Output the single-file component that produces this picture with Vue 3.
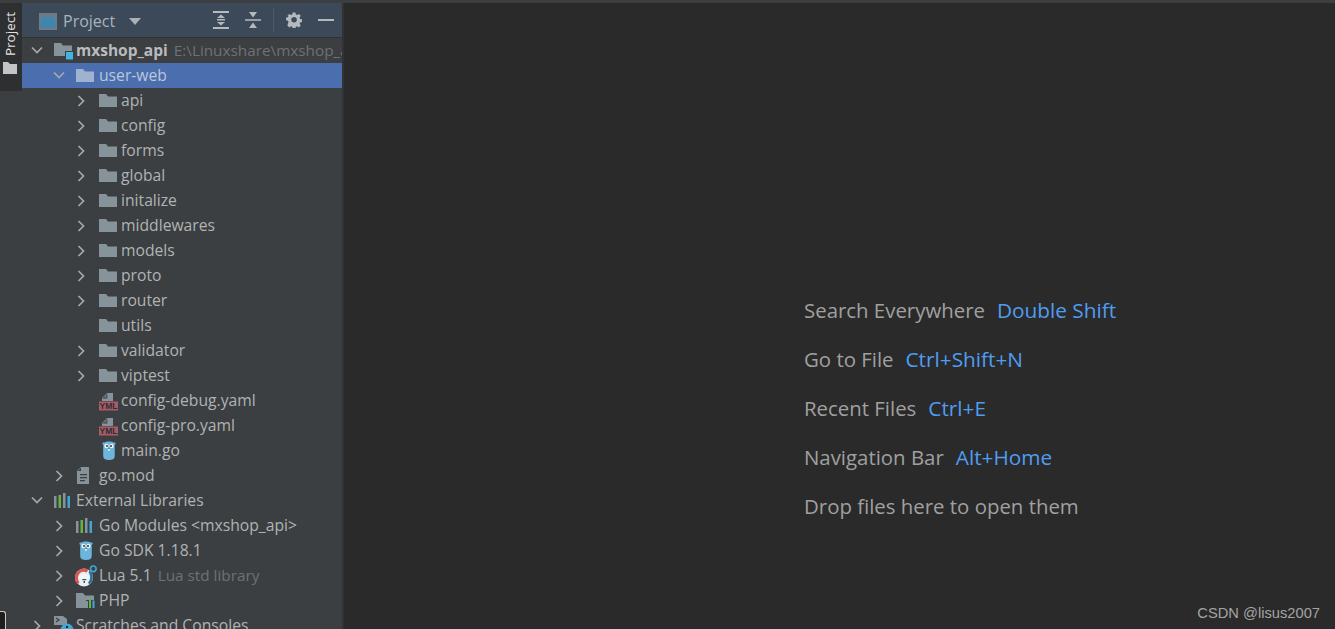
<script setup>
const rows = [
  { level: 0, arrow: 'down', icon: 'module', text: 'mxshop_api', bold: true, hint: 'E:\\Linuxshare\\mxshop_api' },
  { level: 1, arrow: 'down', icon: 'folder', text: 'user-web', selected: true },
  ...['api', 'config', 'forms', 'global', 'initalize', 'middlewares', 'models', 'proto', 'router'].map((text) => ({ level: 2, arrow: 'right', icon: 'folder', text })),
  { level: 2, arrow: '', icon: 'folder', text: 'utils' },
  { level: 2, arrow: 'right', icon: 'folder', text: 'validator' },
  { level: 2, arrow: 'right', icon: 'folder', text: 'viptest' },
  { level: 2, arrow: '', icon: 'yaml', text: 'config-debug.yaml' },
  { level: 2, arrow: '', icon: 'yaml', text: 'config-pro.yaml' },
  { level: 2, arrow: '', icon: 'gopher', text: 'main.go' },
  { level: 1, arrow: 'right', icon: 'file', text: 'go.mod' },
  { level: 0, arrow: 'down', icon: 'lib', text: 'External Libraries' },
  { level: 1, arrow: 'right', icon: 'lib', text: 'Go Modules <mxshop_api>' },
  { level: 1, arrow: 'right', icon: 'gopher', text: 'Go SDK 1.18.1' },
  { level: 1, arrow: 'right', icon: 'lua', text: 'Lua 5.1', hint: 'Lua std library' },
  { level: 1, arrow: 'right', icon: 'php', text: 'PHP' },
  { level: 0, arrow: 'right', icon: 'scratch', text: 'Scratches and Consoles' },
]
const hints = [
  { label: 'Search Everywhere', key: 'Double Shift' },
  { label: 'Go to File', key: 'Ctrl+Shift+N' },
  { label: 'Recent Files', key: 'Ctrl+E' },
  { label: 'Navigation Bar', key: 'Alt+Home' },
  { label: 'Drop files here to open them', key: '' },
]
const indent = (level) => ({ paddingLeft: 7 + 22 * level + 'px' })
</script>

<template>
  <div class="ide">
    <div class="top-line"></div>
    <div class="main">
      <aside class="strip">
        <div class="tab">
          <span class="tab-label">Project</span>
          <svg class="tab-icon" width="16" height="14" viewBox="0 0 16 14"><path fill="#c4c4c4" d="M1 1h5l2 2h7v10H1z"/></svg>
        </div>
        <div class="corner"></div>
      </aside>

      <section class="panel">
        <header class="head">
          <svg width="18" height="17" viewBox="0 0 18 17"><rect width="18" height="17" fill="#6e7b85"/><rect x="2" y="4" width="14" height="11" fill="#3d86ad"/></svg>
          <span class="head-title">Project</span>
          <svg class="caret" width="12" height="7" viewBox="0 0 12 7"><path fill="#a9b0b6" d="M0 0h12L6 7z"/></svg>
          <div class="tools">
            <svg width="16" height="18" viewBox="0 0 16 18"><path fill="#b4b9bd" d="M0 0h16v2H0zM0 16h16v2H0zM8 3.500l4 3.500H4zM8 14.500l4-3.500H4zM4 8h8v1.500H4z"/></svg>
            <svg width="16" height="16" viewBox="0 0 16 16"><path fill="#b4b9bd" d="M0 7.200h16v1.600H0zM4 0h8L8 5.500zM4 16h8L8 10.500z"/></svg>
            <i class="sep"></i>
            <svg width="16" height="16" viewBox="0 0 16 16"><path fill="#b4b9bd" fill-rule="evenodd" d="M6.500 0h3l.4 2.200 1.500.6L13.200 1.500l2.100 2.100-1.300 1.900.6 1.500 2.100.4v3l-2.100.4-.6 1.500 1.300 1.900-2.100 2.100-1.800-1.300-1.500.6-.4 2.200h-3l-.4-2.200-1.500-.6-1.800 1.300-2.100-2.100L2 10.400l-.6-1.500L-.7 8.500v-3l2.100-.4.600-1.500L.7 3.600l2.100-2.100 1.800 1.300 1.500-.6zM8 5a3 3 0 1 0 0 6 3 3 0 0 0 0-6z" transform="translate(.7 .5) scale(.92)"/></svg>
            <svg width="16" height="3" viewBox="0 0 16 3"><path fill="#b4b9bd" d="M0 0h16v2H0z"/></svg>
          </div>
        </header>

        <div class="tree">
          <div v-for="row in rows" :key="row.text" class="row" :class="{ selected: row.selected, root: row.level === 0, deep: row.level === 2 }" :style="indent(row.level)">
            <span class="arrow">
              <svg v-if="row.arrow === 'down'" width="14" height="9" viewBox="0 0 14 9"><path fill="none" stroke="#a6a9ab" stroke-width="1.700" d="M2 1.500l5 5 5-5"/></svg>
              <svg v-else-if="row.arrow === 'right'" width="9" height="14" viewBox="0 0 9 14"><path fill="none" stroke="#a6a9ab" stroke-width="1.700" d="M1.500 2l5 5-5 5"/></svg>
            </span>
            <span class="icon">
              <svg v-if="row.icon === 'folder'" width="18" height="18" viewBox="0 0 18 18"><path :fill="row.selected ? '#9fb2cf' : '#87939a'" d="M0 2h7l2 2.500h9V15H0z"/></svg>
              <svg v-else-if="row.icon === 'module'" width="20" height="20" viewBox="0 0 20 20"><path fill="#87939a" d="M0 2h7l2 2.500h9V15H0z"/><rect x="11" y="10" width="8" height="9" fill="#3c3f41"/><rect x="12" y="11" width="7" height="7.500" fill="#3fb4e5"/></svg>
              <svg v-else-if="row.icon === 'yaml'" width="19" height="20" viewBox="0 0 19 20"><path fill="#87939a" d="M3 10V7l5-5h6v8z"/><path fill="#3c3f41" d="M8.300 7.500V2.500L3.300 7.500z"/><path fill="#6f7a81" d="M4.500 6.500L7.500 3.500v3z"/><rect y="10.500" width="19" height="9" fill="#a85b68"/><text x="9.500" y="18.300" class="yml">YML</text></svg>
              <svg v-else-if="row.icon === 'gopher'" class="gopher" width="14" height="20" viewBox="0 0 14 20"><path fill="#6cb6dd" d="M1 1.500h1.700C4 .3 10 .3 11.300 1.500H13c1 .7.800 2-.5 2.400.4 1 .4 10 .1 12.300-.3 1.600-2 2.800-5.600 2.800s-5.300-1.200-5.600-2.800C1.100 13.900 1.100 4.900 1.500 3.900.2 3.500 0 2.200 1 1.500z"/><circle cx="4.500" cy="5" r="2.200" fill="#e8f2f7"/><circle cx="9.500" cy="5" r="2.200" fill="#e8f2f7"/><circle cx="5" cy="5" r="1" fill="#2b3a44"/><circle cx="9" cy="5" r="1" fill="#2b3a44"/><path fill="#dfe7ea" d="M6 7.500h2v2.200H6z"/><path fill="#3b5a6b" d="M6.200 6.800h1.600v1H6.200z"/></svg>
              <svg v-else-if="row.icon === 'file'" width="15" height="19" viewBox="0 0 15 19"><path fill="#87939a" d="M1 5l4-4h8v17H1z"/><path fill="#3c3f41" d="M5 5V1.800L1.800 5z"/><path fill="#3c3f41" d="M4 8h7v1.300H4zM4 11h7v1.300H4zM4 14h5v1.300H4z"/></svg>
              <svg v-else-if="row.icon === 'lib'" width="18" height="18" viewBox="0 0 18 18"><path fill="#87939a" d="M0 4h2.500v12H0zM9 1h2.500v15H9z"/><path fill="#62b543" d="M4.500 3H7v13H4.500z"/><path fill="#3fa6d8" d="M13.500 4H16v12h-2.500z"/></svg>
              <svg v-else-if="row.icon === 'lua'" class="lua" width="22" height="22" viewBox="0 0 22 22"><circle cx="9" cy="12.500" r="9" fill="#e9eef1"/><path fill="#d9574c" d="M0 12.500A9 9 0 0 1 13.500 4.700L11.500 7.500C7 5.500 3 8.500 3 13c0 1.500.5 3 1.500 4l-1.300 2.300A9 9 0 0 1 0 12.500z"/><path fill="#2f6f9c" d="M14.500 5.500A9 9 0 0 1 14.500 19.500L13 17.500c2.500-2.500 3-7 .5-10z"/><path fill="#f2f5f6" d="M4.500 12a5 4.500 0 0 1 9.500 0v1.800l-2 1V18H6.500v-3.200l-2-1z"/><path fill="#34566e" d="M7.300 14h4v1.200h-4zM8.500 16h1.500v2H8.500z"/><circle cx="18.300" cy="3.800" r="2.800" fill="#3c3f41" stroke="#3fa6d8" stroke-width="1.600"/></svg>
              <svg v-else-if="row.icon === 'php'" width="20" height="18" viewBox="0 0 20 18"><path fill="#87939a" d="M0 1h7l2 2.500h9V8h-8v8H0z"/><path fill="#87939a" d="M10 9h2v7h-2z"/><path fill="#62b543" d="M13 7h2v9h-2z"/><path fill="#3fa6d8" d="M16.500 8.500h2V16h-2z"/></svg>
              <svg v-else-if="row.icon === 'scratch'" width="20" height="20" viewBox="0 0 20 20"><path fill="#87939a" d="M0 0h9l4 3v6H0z"/><path fill="none" stroke="#3c3f41" stroke-width="1.200" d="M2 2l3 2-3 2"/><circle cx="13" cy="14" r="6.500" fill="#3fa6d8"/><path fill="#10222c" d="M12 10h2v2h-2zM12 13h2v5h-2z"/></svg>
            </span>
            <span class="name" :class="{ bold: row.bold }">{{ row.text }}</span>
            <span v-if="row.hint" class="hint">{{ row.hint }}</span>
          </div>
        </div>
      </section>

      <main class="editor">
        <div class="hints">
          <p v-for="h in hints" :key="h.label" class="line">
            <span class="label">{{ h.label }}</span>
            <span v-if="h.key" class="key">{{ h.key }}</span>
          </p>
        </div>
        <span class="mark">CSDN @lisus2007</span>
      </main>
    </div>
  </div>
</template>

<style>
html, body { margin: 0; background: #2a2a2a; }
</style>

<style scoped>
.ide {
  width: 1335px;
  height: 629px;
  overflow: hidden;
  display: flex;
  flex-direction: column;
  font-family: "Open Sans", "Noto Sans", sans-serif;
  font-size: 15.700px;
  background: #2a2a2a;
}
.top-line { height: 3px; flex: none; background: #3c3f41; }
.main { flex: 1; display: flex; min-height: 0; }
.strip {
  width: 22px;
  flex: none;
  display: flex;
  flex-direction: column;
  justify-content: space-between;
  background: #3c3f41;
}
.tab {
  height: 88px;
  background: #2d2f30;
  display: flex;
  flex-direction: column;
  align-items: center;
  padding-top: 9px;
  gap: 5px;
  box-sizing: border-box;
}
.tab-label {
  writing-mode: vertical-rl;
  transform: rotate(180deg);
  color: #e2e2e2;
  font-size: 13.500px;
  line-height: 20px;
  margin-left: -3px;
}
.tab-icon { flex: none; margin-left: -3px; }
.corner {
  width: 5px;
  height: 17px;
  border: 1px solid #c9c9c9;
  border-left: 0;
  border-bottom: 0;
  border-top-right-radius: 3px;
  background: #1e1e1e;
}
.panel {
  width: 320px;
  flex: none;
  background: #3c3f41;
  border-right: 2px solid #323232;
  overflow: hidden;
}
.head {
  height: 35px;
  box-sizing: border-box;
  display: flex;
  align-items: center;
  padding: 2px 8px 0 17px;
  background: #3c4958;
  border-bottom: 1px solid #323232;
}
.head-title { margin-left: 6px; color: #a9b3bd; font-size: 16px; }
.caret { margin-left: 14px; }
.tools { margin-left: auto; margin-top: -2px; display: flex; align-items: center; gap: 16px; }
.sep { width: 1px; height: 24px; background: #4f5b68; margin: 0 -4px; }
.tree { display: flex; flex-direction: column; }
.row {
  height: 25px;
  flex: none;
  display: flex;
  align-items: center;
  white-space: nowrap;
  color: #b0b3b5;
}
.name, .hint { padding-bottom: 2px; }
.row.root .name { margin-left: -1px; }
.row.selected { background: #4b6eaf; color: #bcc7d8; }
.arrow {
  width: 16px;
  margin-right: 9px;
  flex: none;
  display: flex;
  justify-content: center;
  align-items: center;
}
.row.deep .arrow { margin-right: 10px; }
.icon {
  width: 18px;
  height: 20px;
  margin-right: 5px;
  flex: none;
  display: flex;
  align-items: center;
  justify-content: flex-start;
  overflow: visible;
}
.row.deep .icon { margin-right: 4px; }
.icon svg { flex: none; }
.icon .gopher { margin-left: 3px; }
.icon .lua { margin-left: -1px; }
.yml { font: 700 8.500px "Liberation Sans", sans-serif; fill: #2f2f2f; text-anchor: middle; }
.name.bold { font-weight: 700; font-size: 15.500px; color: #b9bbbd; }
.hint { margin-left: 6px; color: #6f7173; font-size: 15.300px; }
.editor { flex: 1; min-width: 0; position: relative; background: #2a2a2a; }
.hints {
  position: absolute;
  left: 460px;
  top: 282px;
  font-size: 20.400px;
}
.line {
  margin: 0;
  height: 49px;
  display: flex;
  gap: 12px;
  align-items: center;
  white-space: nowrap;
}
.label { color: #a0a0a0; }
.key { color: #4f9df2; font-size: 20.800px; }
.mark {
  position: absolute;
  right: 15px;
  bottom: 8px;
  color: #a4a4a4;
  font-size: 14.700px;
  font-family: "Liberation Sans", Arial, sans-serif;
}
</style>
